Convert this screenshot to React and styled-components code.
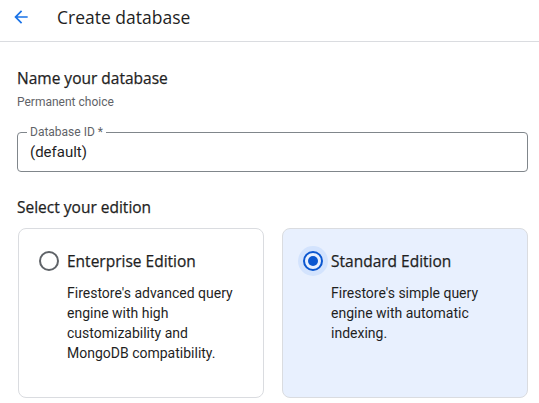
import React from "react";
import styled, { createGlobalStyle } from "styled-components";

const Global = createGlobalStyle`
  html, body { margin: 0; padding: 0; background: #fff; }
  body { font-family: Roboto, "Liberation Sans", sans-serif; color: #1f1f1f; }
  * { box-sizing: border-box; }
`;

const Page = styled.div`
  width: 539px;
  height: 403px;
  overflow: hidden;
  background: #fff;
`;

const Header = styled.header`
  height: 42px;
  display: flex;
  align-items: center;
  padding-left: 11px;
  border-bottom: 1px solid #dadce0;
`;

const BackButton = styled.button`
  width: 20px;
  height: 20px;
  padding: 0;
  border: 0;
  background: none;
  display: flex;
  align-items: center;
  justify-content: center;
  margin-top: -8px;
  cursor: pointer;
`;

const Title = styled.h1`
  margin: -8px 0 0 26px;
  font-family: "Open Sans", sans-serif;
  font-size: 17.5px;
  font-weight: 400;
  color: #1f1f1f;
`;

const Content = styled.main`
  padding: 26px 11px 0 17px;
`;

const SectionTitle = styled.h2`
  margin: 0;
  font-family: "Open Sans", sans-serif;
  font-size: 15.5px;
  font-weight: 500;
  line-height: 20px;
  color: #1f1f1f;
  -webkit-text-stroke: 0.25px #1f1f1f;
`;

const Hint = styled.p`
  margin: 6px 0 0;
  font-size: 12px;
  line-height: 16px;
  color: #5f6368;
`;

const Field = styled.fieldset`
  margin: 16px 0 0;
  padding: 0 12px;
  height: 46px;
  border: 1px solid #80868b;
  border-radius: 4px;
`;

const Legend = styled.legend`
  padding: 0 3px;
  margin-left: -3px;
  font-size: 12px;
  line-height: 12px;
  color: #5f6368;
`;

const Value = styled.div`
  font-size: 15px;
  line-height: 20px;
  color: #1f1f1f;
  margin-top: 4px;
`;

const EditionTitle = styled(SectionTitle)`
  margin-top: 25px;
`;

const Cards = styled.div`
  display: grid;
  grid-template-columns: 246px 246px;
  gap: 18px;
  margin-top: 11px;
  margin-left: 1px;
`;

const Card = styled.label`
  height: 170px;
  border: 1px solid #dadce0;
  border-radius: 8px;
  background: ${(p) => (p.$selected ? "#e8f0fe" : "#fff")};
  display: grid;
  grid-template-columns: 48px 1fr;
  padding: 18px 12px 0 0;
  cursor: pointer;
`;

const RadioWrap = styled.span`
  height: 28px;
  display: flex;
  align-items: center;
  padding-left: 20px;
`;

const Radio = styled.span`
  width: 20px;
  height: 20px;
  border-radius: 50%;
  border: 2px solid ${(p) => (p.$checked ? "#0b57d0" : "#5f6368")};
  display: flex;
  align-items: center;
  justify-content: center;
  flex: none;
  background: ${(p) => (p.$checked ? "#e8f0fe" : "#fff")};
  box-shadow: ${(p) => (p.$checked ? "0 0 0 5px #d3e3fd" : "none")};

  &::after {
    content: "";
    display: ${(p) => (p.$checked ? "block" : "none")};
    width: 10px;
    height: 10px;
    border-radius: 50%;
    background: #0b57d0;
  }
`;

const CardBody = styled.div`
  display: flex;
  flex-direction: column;
`;

const CardTitle = styled.div`
  font-family: "Open Sans", sans-serif;
  font-size: 15.5px;
  font-weight: 500;
  line-height: 28px;
  color: #1f1f1f;
  -webkit-text-stroke: 0.25px #1f1f1f;
`;

const CardText = styled.div`
  margin-top: 8px;
  font-size: 14px;
  line-height: 20px;
  color: #1f1f1f;
`;

const ArrowIcon = () => (
  <svg width="20" height="20" viewBox="0 0 24 24" aria-hidden="true">
    <path d="M20 11H7.83l5.59-5.59L12 4l-8 8 8 8 1.41-1.41L7.83 13H20v-2z" fill="#1a73e8" />
  </svg>
);

export default function App() {
  return (
    <Page>
      <Global />
      <Header>
        <BackButton aria-label="Back">
          <ArrowIcon />
        </BackButton>
        <Title>Create database</Title>
      </Header>
      <Content>
        <SectionTitle>Name your database</SectionTitle>
        <Hint>Permanent choice</Hint>
        <Field>
          <Legend>Database ID *</Legend>
          <Value>(default)</Value>
        </Field>
        <EditionTitle>Select your edition</EditionTitle>
        <Cards>
          <Card>
            <RadioWrap>
              <Radio />
            </RadioWrap>
            <CardBody>
              <CardTitle>Enterprise Edition</CardTitle>
              <CardText>
                Firestore's advanced query engine with high customizability and MongoDB compatibility.
              </CardText>
            </CardBody>
          </Card>
          <Card $selected>
            <RadioWrap>
              <Radio $checked />
            </RadioWrap>
            <CardBody>
              <CardTitle>Standard Edition</CardTitle>
              <CardText>Firestore's simple query engine with automatic indexing.</CardText>
            </CardBody>
          </Card>
        </Cards>
      </Content>
    </Page>
  );
}
